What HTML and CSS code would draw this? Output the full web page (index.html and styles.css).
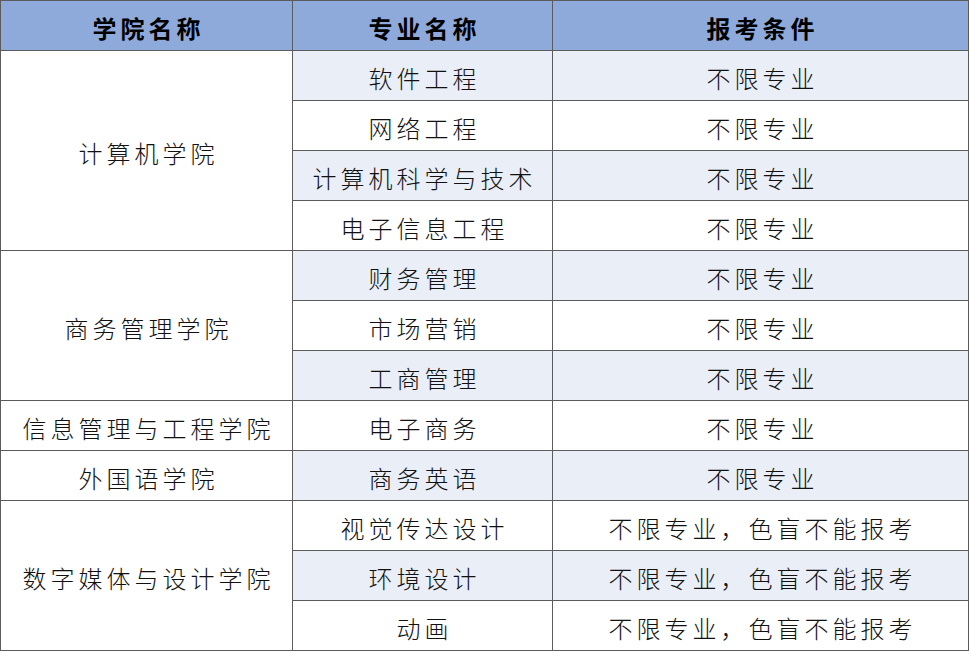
FILE: index.html
```html
<!DOCTYPE html>
<html lang="zh-CN">
<head>
<meta charset="utf-8">
<title>报考条件</title>
<link rel="stylesheet" href="styles.css">
</head>
<body>
<table class="grid">
  <colgroup>
    <col class="c1"><col class="c2"><col class="c3">
  </colgroup>
  <thead>
    <tr class="head"><th>学院名称</th><th>专业名称</th><th>报考条件</th></tr>
  </thead>
  <tbody>
    <tr class="odd"><td class="school" rowspan="4">计算机学院</td><td>软件工程</td><td>不限专业</td></tr>
    <tr><td>网络工程</td><td>不限专业</td></tr>
    <tr class="odd"><td>计算机科学与技术</td><td>不限专业</td></tr>
    <tr><td>电子信息工程</td><td>不限专业</td></tr>
    <tr class="odd"><td class="school" rowspan="3">商务管理学院</td><td>财务管理</td><td>不限专业</td></tr>
    <tr><td>市场营销</td><td>不限专业</td></tr>
    <tr class="odd"><td>工商管理</td><td>不限专业</td></tr>
    <tr><td class="school">信息管理与工程学院</td><td>电子商务</td><td>不限专业</td></tr>
    <tr class="odd"><td class="school">外国语学院</td><td>商务英语</td><td>不限专业</td></tr>
    <tr><td class="school" rowspan="3">数字媒体与设计学院</td><td>视觉传达设计</td><td>不限专业，色盲不能报考</td></tr>
    <tr class="odd"><td>环境设计</td><td>不限专业，色盲不能报考</td></tr>
    <tr><td>动画</td><td>不限专业，色盲不能报考</td></tr>
  </tbody>
</table>
</body>
</html>
```
FILE: styles.css
```css
html, body {
  margin: 0;
  padding: 0;
  background: #ffffff;
}
.grid {
  border-collapse: collapse;
  width: 968px;
  table-layout: fixed;
  font-family: "Noto Sans CJK SC", "Noto Sans", sans-serif;
  font-size: 24px;
  font-weight: 300;
  color: #111111;
  letter-spacing: 4px;
}
.c1 { width: 292px; }
.c2 { width: 260px; }
.c3 { width: 416px; }
.grid th, .grid td {
  border: 1px solid #5b5b5b;
  height: 50px;
  padding: 4px 0 0 4px;
  text-align: center;
  vertical-align: middle;
  line-height: 24px;
  white-space: nowrap;
  box-sizing: border-box;
}
.grid th {
  background: #8eaadb;
  font-weight: 700;
  color: #000000;
}
.grid tr.odd td {
  background: #e9eef7;
}
.grid tr.odd td.school,
.grid td.school {
  background: #ffffff;
}
```
